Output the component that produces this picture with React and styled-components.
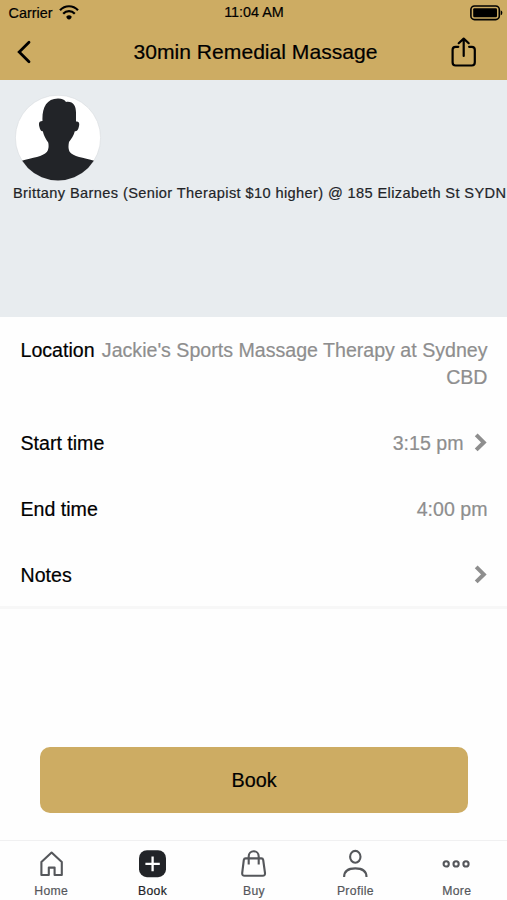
import styled, { createGlobalStyle } from "styled-components";

const GlobalStyle = createGlobalStyle`
  * {
    box-sizing: border-box;
  }

  body {
    margin: 0;
    background-color: #fefefe;
    color: #000;
    font-family: "Liberation Sans", Arial, sans-serif;
    -webkit-text-stroke: 0.2px currentColor;
  }

  button {
    font-family: inherit;
    color: inherit;
    border: none;
    padding: 0;
    background: none;
  }

  svg {
    display: block;
    flex-shrink: 0;
  }
`;

const Screen = styled.div`
  display: flex;
  flex-direction: column;
  width: 507px;
  height: 900px;
  overflow: hidden;
`;

const Header = styled.header`
  height: 80px;
  background-color: #cdac63;
`;

const StatusBar = styled.div`
  display: grid;
  grid-template-columns: 1fr auto 1fr;
  align-items: center;
  height: 25px;
  padding: 0 4px 0 8px;
  font-size: 14.4px;
`;

const Carrier = styled.div`
  display: flex;
  align-items: center;
  gap: 7px;
  padding-left: 0.5px;
`;

const Clock = styled.span`
  padding: 0 3px 1px 0;
`;

const BatterySlot = styled.div`
  display: flex;
  justify-content: flex-end;
`;

const NavBar = styled.div`
  display: grid;
  grid-template-columns: 60px 1fr 60px;
  align-items: center;
  height: 54px;
  padding: 0 13px;
`;

const NavButton = styled.button`
  display: flex;
  justify-content: ${(props) => (props.$end ? "flex-end" : "flex-start")};
  padding: ${(props) => (props.$end ? "0 17px 1px 0" : "0 0 0 3px")};
`;

const Title = styled.h1`
  margin: 0 0 1px 4px;
  text-align: center;
  font-size: 21.1px;
  font-weight: 400;
  white-space: nowrap;
`;

const Therapist = styled.section`
  height: 237px;
  padding: 15px 0 0 13px;
  background-color: #e8ecef;
  color: #222428;
`;

const TherapistName = styled.div`
  margin-top: 3px;
  font-size: 14.6px;
  line-height: 18px;
  letter-spacing: 0.38px;
  white-space: nowrap;
`;

const Details = styled.section`
  height: 292px;
  border-bottom: 3px solid #f7f7f7;
  font-size: 19.6px;
  line-height: 27px;
`;

const DetailRow = styled.div`
  display: flex;
  justify-content: space-between;
  padding: 19.5px 19.5px 19.5px 20.5px;
`;

const DetailLabel = styled.span`
  white-space: nowrap;
`;

const DetailValue = styled.span`
  display: flex;
  align-items: center;
  gap: 10px;
  text-align: right;
  color: #8e8e8e;
`;

const Footer = styled.div`
  flex: 1;
  display: flex;
  flex-direction: column;
  justify-content: flex-end;
  padding: 0 39px 27px 40px;
`;

const BookButton = styled.button`
  height: 66px;
  border-radius: 10px;
  background-color: #cdac63;
  font-size: 19.8px;
`;

const TabBar = styled.nav`
  display: grid;
  grid-template-columns: repeat(5, 1fr);
  height: 60px;
  border-top: 1px solid #f0f0f1;
`;

const Tab = styled.button`
  display: flex;
  flex-direction: column;
  align-items: center;
  gap: 5px;
  padding-top: 8px;
  font-size: 12.2px;
  line-height: 15px;
  letter-spacing: 0.35px;
  color: ${(props) => (props.$active ? "#222428" : "#55575b")};
`;

const TabLabel = styled.span`
  padding-left: 1px;
`;

const WifiIcon = () => (
  <svg width="20" height="15" viewBox="0 0 20 15" fill="none" stroke="#000" strokeWidth="2.2">
    <path d="M1 5.3C6-0.1 14-0.1 19 5.3" />
    <path d="M4.2 8.7C7.4 5.2 12.6 5.2 15.8 8.7" />
    <path d="M7.3 11.6Q10 9 12.7 11.6Q12.4 14.4 10 14.4T7.3 11.6Z" fill="#000" stroke="none" />
  </svg>
);

const BatteryIcon = () => (
  <svg width="33" height="16" viewBox="0 0 33 16">
    <rect x="0.9" y="1" width="28.4" height="13.6" rx="3.6" fill="none" stroke="#000" strokeWidth="1.6" />
    <rect x="3.2" y="3.3" width="23.8" height="9" rx="1.2" />
    <path d="M30.7 5.3Q32.4 5.8 32.4 7.8T30.7 10.3Z" />
  </svg>
);

const BackIcon = () => (
  <svg width="16" height="24" viewBox="0 0 16 24" fill="none" stroke="#000" strokeWidth="2.8" strokeLinecap="round" strokeLinejoin="miter">
    <path d="M13 2.2L3.2 12L13 21.8" />
  </svg>
);

const ShareIcon = () => (
  <svg width="26" height="30" viewBox="0 0 26 30" fill="none" stroke="#000" strokeWidth="2.2" strokeLinecap="round" strokeLinejoin="round">
    <path d="M7.3 9.8H4.6Q1.6 9.8 1.6 12.8V25.2Q1.6 28.5 4.6 28.5H20.8Q23.8 28.5 23.8 25.2V12.8Q23.8 9.8 20.8 9.8H18.1" />
    <path d="M12.7 19V2M7.7 6.2L12.7 1.6L17.7 6.2" />
  </svg>
);

const ChevronIcon = () => (
  <svg width="14" height="20" viewBox="0 0 14 20" fill="none" stroke="#8e8e8e" strokeWidth="4">
    <path d="M2.2 1.9L9.8 9.4L2.2 16.9" />
  </svg>
);

const Avatar = () => (
  <svg width="90" height="86" viewBox="0 0 90 86">
    <clipPath id="face">
      <circle cx="45" cy="42.8" r="42.6" />
    </clipPath>
    <circle cx="45" cy="42.8" r="42.6" fill="#fff" stroke="#d8dcdf" strokeWidth="0.6" />
    <path
      clipPath="url(#face)"
      fill="#222428"
      d="M29.5 26C28.8 14 33 3.6 45 3.6C49.2 3.6 51.8 5 53 7C60 5.8 63.2 11 63 18V26.5C66.2 26 66.8 28.5 65.8 32C65 35.5 63.8 36.5 61.8 36.3C60.8 40.5 58.5 44 56 47C55.4 50 55 54 56.8 57C60 61.5 70 62.5 82 66V88H8V66C20 62.5 30 61.5 33.8 57C36 54 35.8 50 35.2 47.5C32.5 44 30.8 40.5 29.8 36.3C28 36.5 27 34.5 26.3 31.5C25.3 27.5 26.4 26 29.5 26Z"
    />
  </svg>
);

const TabIcon = ({ children }) => (
  <svg width="30" height="30" viewBox="0 0 30 30" fill="none" stroke="#55575b" strokeWidth="2.1">
    {children}
  </svg>
);

const TABS = [
  {
    label: "Home",
    icon: <path d="M5.4 26V13L15.6 3.6L25.8 13V26H18.6V18.6H12.8V26Z" strokeLinejoin="round" />,
  },
  {
    label: "Book",
    active: true,
    icon: (
      <>
        <rect x="2" y="1.2" width="27" height="27" rx="8" fill="#222428" stroke="none" />
        <path d="M15.6 7.5V22.2M8.4 14.9H22.8" stroke="#fff" strokeWidth="2.3" />
      </>
    ),
  },
  {
    label: "Buy",
    icon: (
      <>
        <path d="M7.6 9.4H23.4Q24.9 9.4 25.2 11L27 24Q27.2 26.8 24.6 26.8H6.6Q4 26.8 4.2 24L5.8 11Q6.1 9.4 7.6 9.4Z" strokeLinejoin="round" />
        <path d="M10.7 15.6V7.4A5 5.2 0 0 1 20.7 7.4V15.6" />
      </>
    ),
  },
  {
    label: "Profile",
    icon: (
      <>
        <ellipse cx="15.3" cy="7.8" rx="5.2" ry="5.9" />
        <path d="M4.1 28C4.1 22 9 19.4 15.3 19.4S26.5 22 26.5 28" />
      </>
    ),
  },
  {
    label: "More",
    icon: (
      <>
        <circle cx="5.2" cy="14.9" r="2.6" />
        <circle cx="15.1" cy="14.9" r="2.6" />
        <circle cx="25" cy="14.9" r="2.6" />
      </>
    ),
  },
];

const DETAILS = [
  { label: "Location", value: "Jackie's Sports Massage Therapy at Sydney CBD" },
  { label: "Start time", value: "3:15 pm", link: true },
  { label: "End time", value: "4:00 pm" },
  { label: "Notes", value: "", link: true },
];

const App = () => {
  return (
    <Screen>
      <GlobalStyle />
      <Header>
        <StatusBar>
          <Carrier>
            Carrier
            <WifiIcon />
          </Carrier>
          <Clock>11:04 AM</Clock>
          <BatterySlot>
            <BatteryIcon />
          </BatterySlot>
        </StatusBar>
        <NavBar>
          <NavButton aria-label="Back">
            <BackIcon />
          </NavButton>
          <Title>30min Remedial Massage</Title>
          <NavButton $end aria-label="Share">
            <ShareIcon />
          </NavButton>
        </NavBar>
      </Header>
      <Therapist>
        <Avatar />
        <TherapistName>
          Brittany Barnes (Senior Therapist $10 higher) @ 185 Elizabeth St SYDN
        </TherapistName>
      </Therapist>
      <Details>
        {DETAILS.map((item) => (
          <DetailRow key={item.label}>
            <DetailLabel>{item.label}</DetailLabel>
            <DetailValue>
              {item.value}
              {item.link && <ChevronIcon />}
            </DetailValue>
          </DetailRow>
        ))}
      </Details>
      <Footer>
        <BookButton>Book</BookButton>
      </Footer>
      <TabBar>
        {TABS.map((tab) => (
          <Tab key={tab.label} $active={tab.active}>
            <TabIcon>{tab.icon}</TabIcon>
            <TabLabel>{tab.label}</TabLabel>
          </Tab>
        ))}
      </TabBar>
    </Screen>
  );
};

export default App;
